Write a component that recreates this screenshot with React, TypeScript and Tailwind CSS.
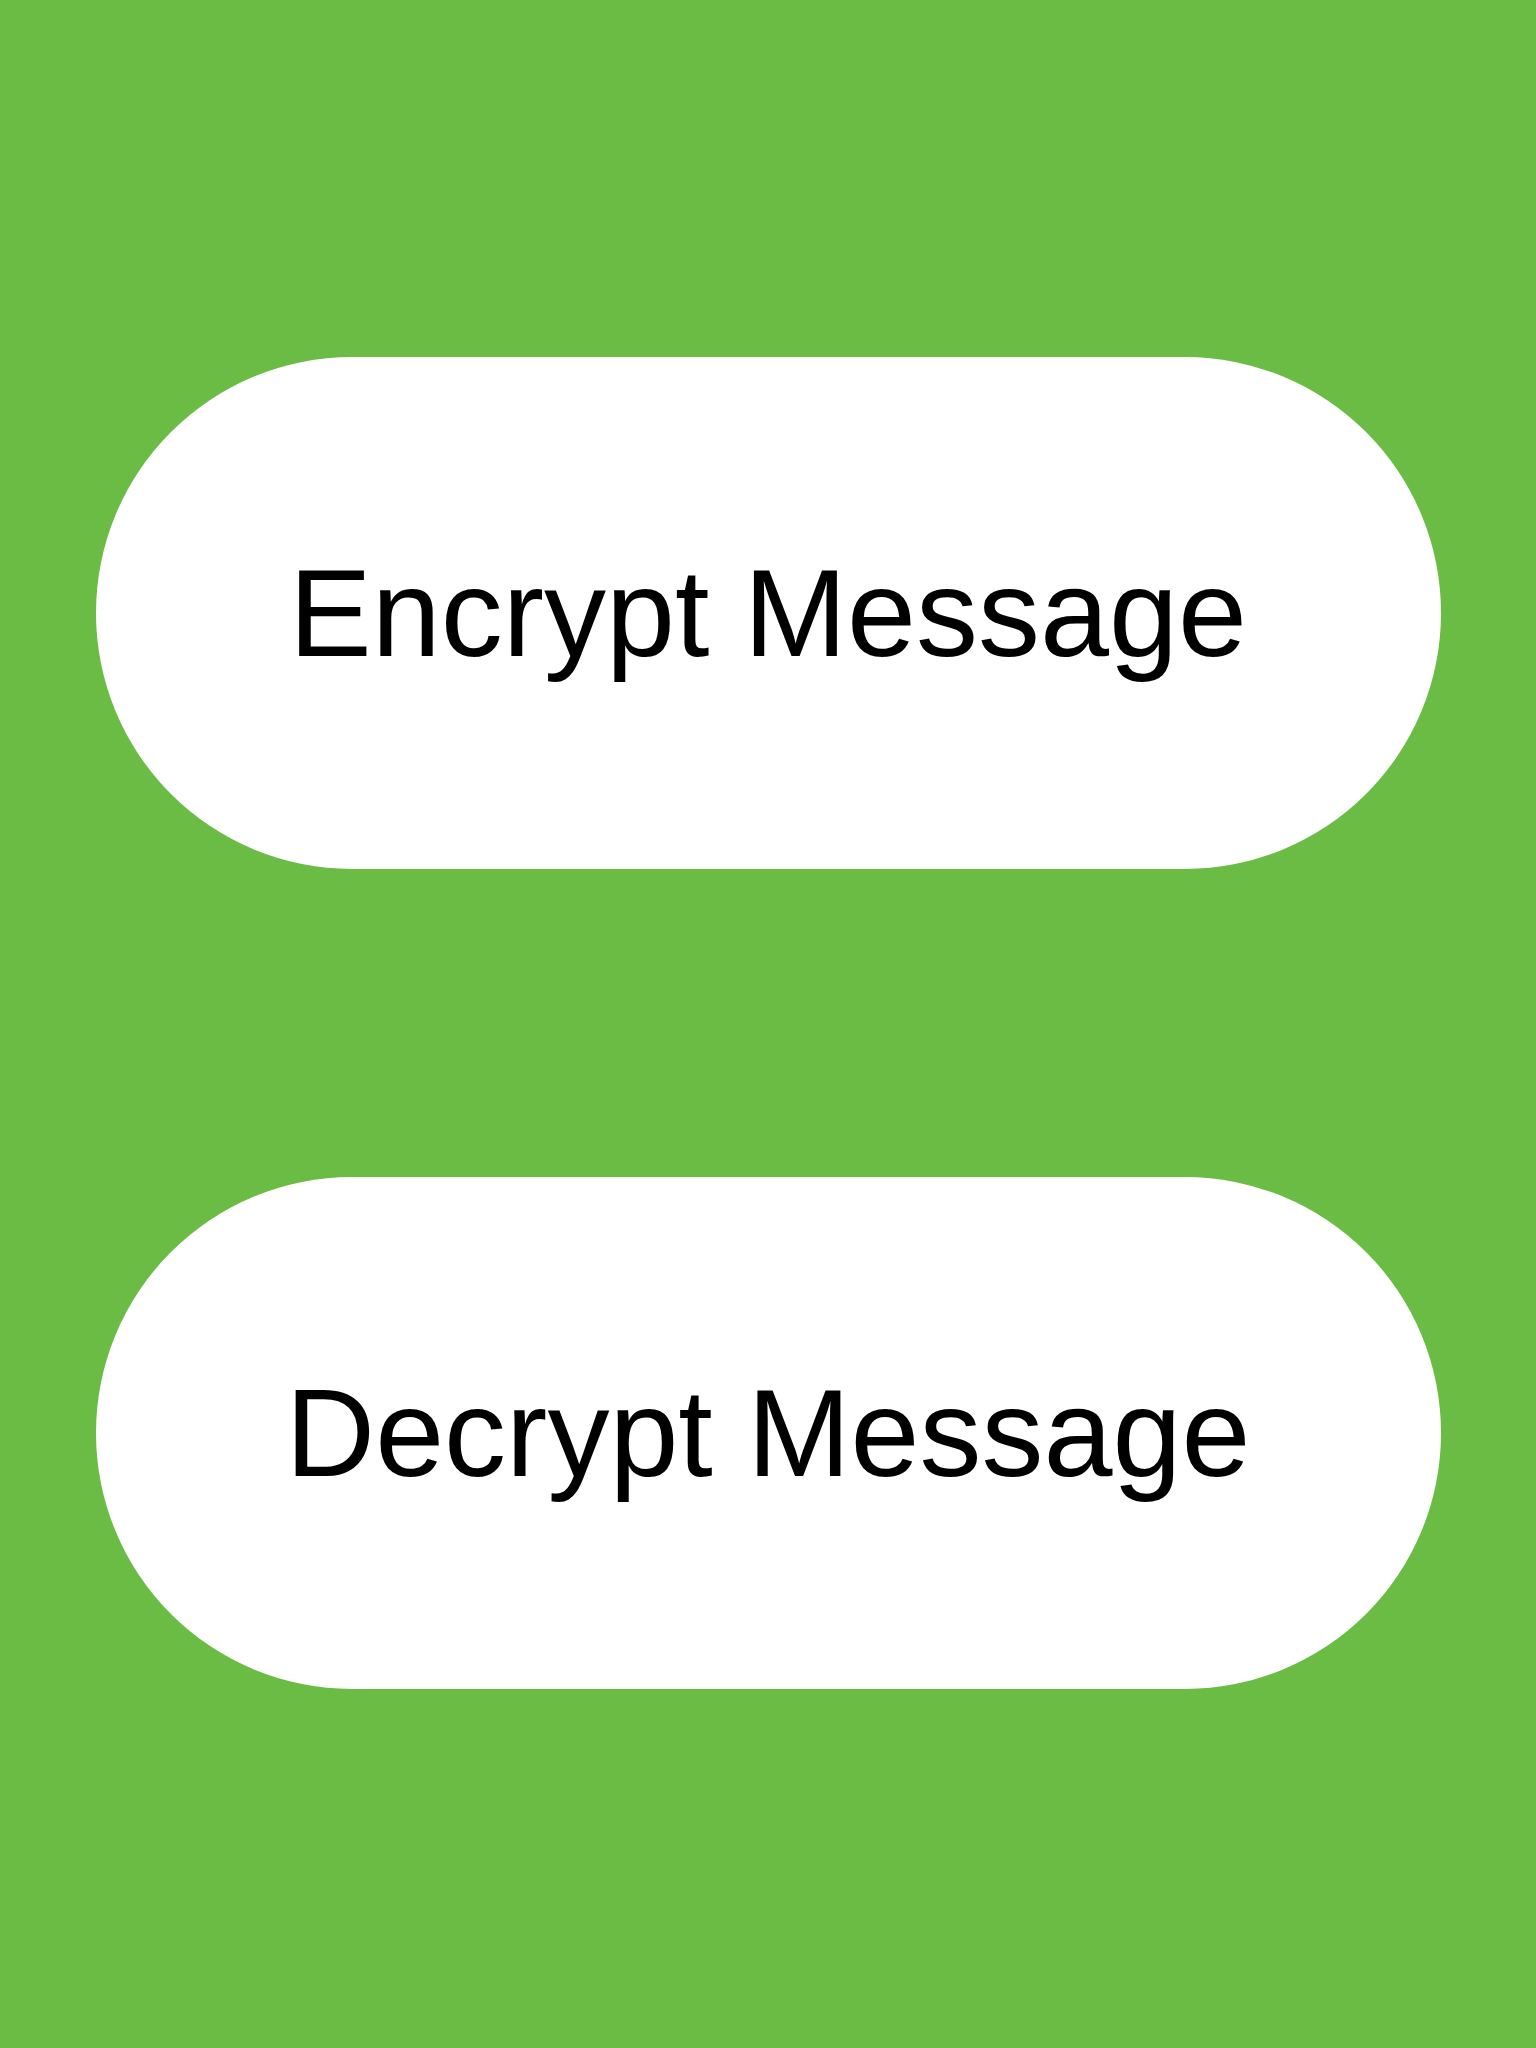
export default function App() {
  return (
    <div className="min-h-[2048px] w-full bg-[#6bbc45] flex flex-col items-center pt-[357px] gap-[308px]">
      <button className="w-[1345px] h-[512px] rounded-full bg-white flex items-center justify-center text-black text-[124px] leading-none font-['Liberation_Sans',Arial,sans-serif]">
        Encrypt Message
      </button>
      <button className="w-[1345px] h-[512px] rounded-full bg-white flex items-center justify-center text-black text-[124px] leading-none font-['Liberation_Sans',Arial,sans-serif]">
        Decrypt Message
      </button>
    </div>
  );
}
